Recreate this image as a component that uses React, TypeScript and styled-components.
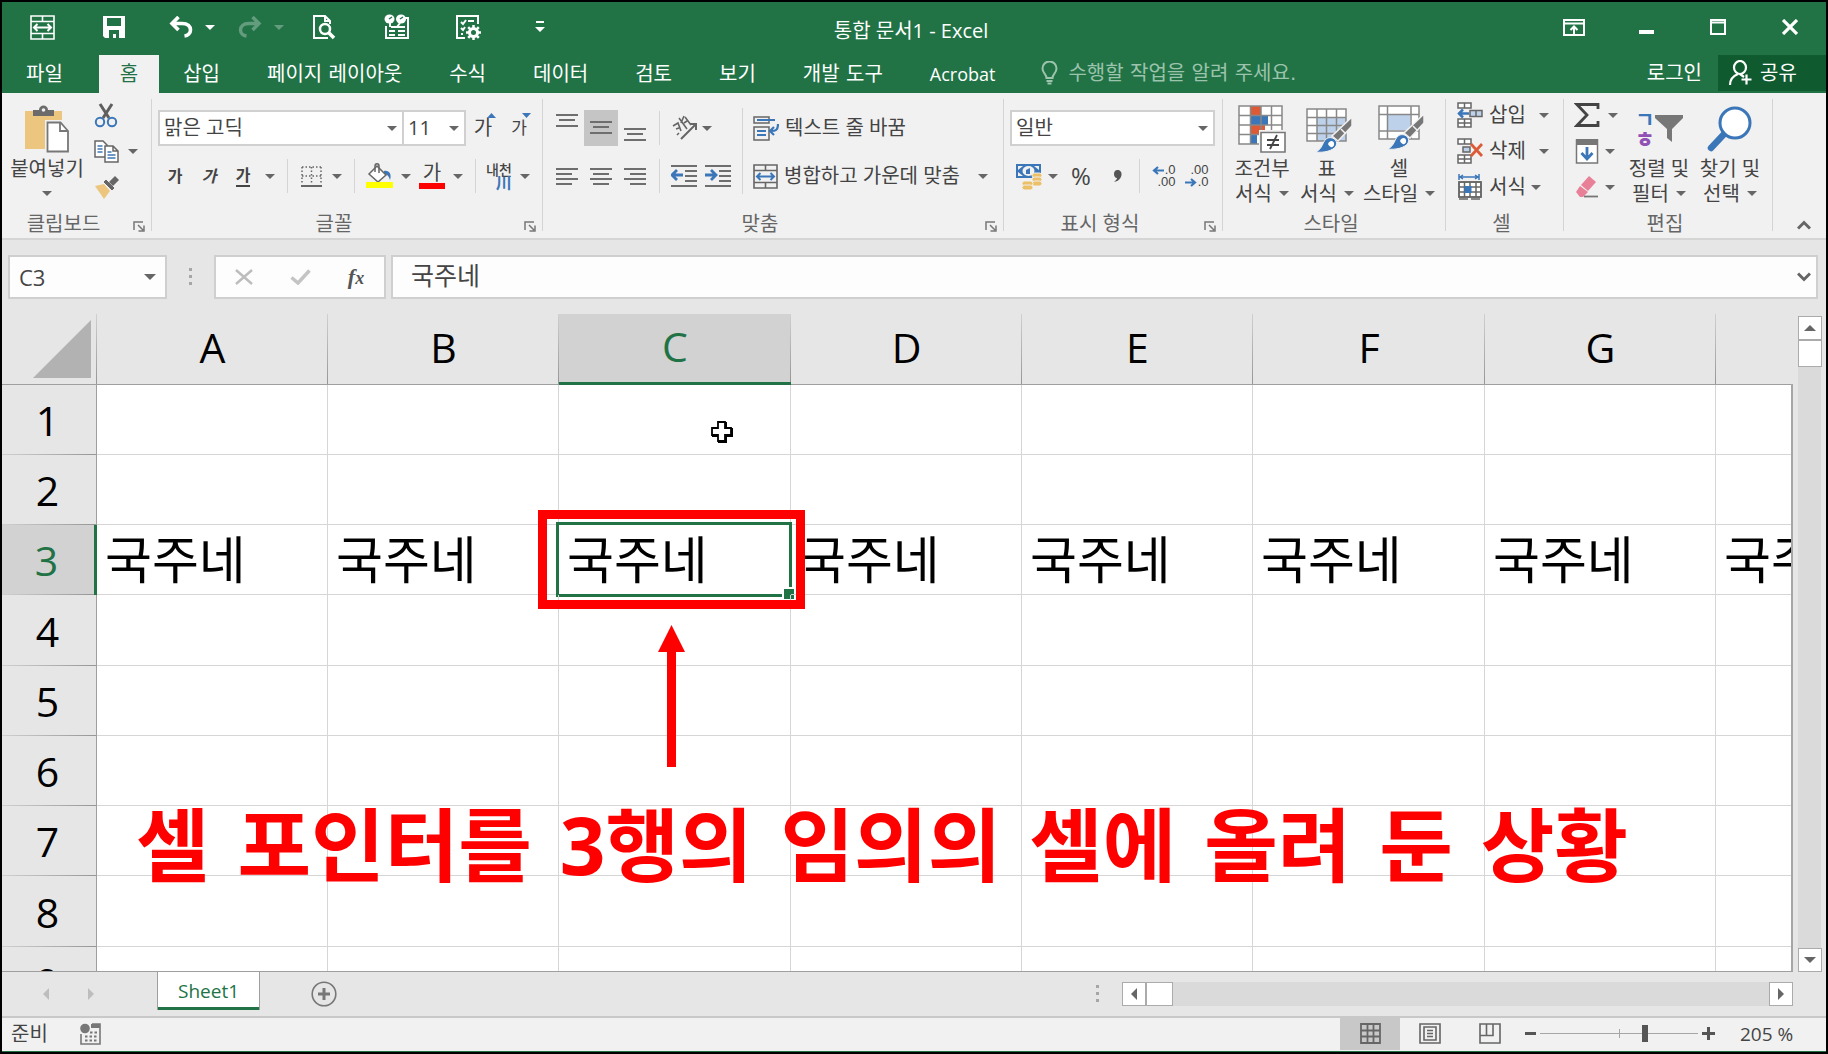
import React from 'react';
import styled, { createGlobalStyle, css } from 'styled-components';

const GREEN = '#217346';
const UI_FONT = '"Open Sans", "Noto Sans CJK KR", sans-serif';
const TAB_FONT = '"DejaVu Sans", "Noto Sans CJK KR", sans-serif';

const GlobalStyle = createGlobalStyle`
  * { box-sizing: border-box; }
  html, body { margin: 0; padding: 0; }
  body { font-family: ${UI_FONT}; font-size: 20px; line-height: 24px; color: #444; }
  button, input, select {
    font: inherit; color: inherit; margin: 0; padding: 0;
    border: 0; background: none; border-radius: 0; outline: none;
  }
  svg { display: block; flex: none; }
`;

/* ---------- window ---------- */

const Window = styled.div`
  display: flex;
  flex-direction: column;
  height: 100vh;
  border: 2px solid #000;
  background: #e6e6e6;
  overflow: hidden;
`;

const TitleBar = styled.header`
  display: grid;
  grid-template-columns: 1fr auto 1fr;
  height: 53px;
  flex: none;
  background: ${GREEN};
  color: #fff;
`;

const QuickAccess = styled.div`
  display: flex;
  padding-left: 4px;
  height: 44px;
`;

const QuickButton = styled.button<{ $split?: boolean; $faded?: boolean }>`
  display: flex;
  align-items: center;
  justify-content: ${p => (p.$split ? 'flex-start' : 'center')};
  gap: 12px;
  width: ${p => (p.$split ? 69 : 72)}px;
  height: 50px;
  flex: none;
  padding-left: ${p => (p.$split ? 19 : 0)}px;
  opacity: ${p => (p.$faded ? 0.3 : 1)};
`;

const WindowTitle = styled.h1`
  margin: 0;
  padding: 17px 6px 0 0;
  font-size: 20px;
  font-weight: 400;
  line-height: 24px;
  white-space: nowrap;
`;

const WindowControls = styled.div`
  display: flex;
  justify-content: flex-end;
`;

const ControlButton = styled.button`
  display: grid;
  place-items: center;
  width: 72px;
  height: 50px;
`;

/* ---------- tabs ---------- */

const TabBar = styled.nav`
  display: flex;
  height: 38px;
  flex: none;
  background: ${GREEN};
  color: #fff;
  font-family: ${TAB_FONT};
  white-space: nowrap;
`;

const Tab = styled.button<{ $active?: boolean; $file?: boolean; $latin?: boolean }>`
  padding: 0 23px 0 24px;
  ${p => p.$file && css`padding-right: 36px;`}
  font-size: 20px;
  line-height: 36px;
  ${p => p.$latin && css`
    font-family: ${UI_FONT};
    font-size: 18px;
  `}
  ${p => p.$active && css`
    padding: 0 21px;
    background: #f1f1f1;
    color: ${GREEN};
  `}
`;

const TellMe = styled.label`
  display: flex;
  align-items: center;
  gap: 10px;
  flex: 1;
  height: 36px;
  padding-left: 23px;
`;

const TellMeInput = styled.input`
  width: 300px;
  height: 36px;
  &::placeholder { color: #9cc3ac; opacity: 1; }
`;

const SignIn = styled.a`
  padding: 0 16px;
  line-height: 36px;
  color: #fff;
  text-decoration: none;
`;

const ShareButton = styled.button`
  display: flex;
  align-items: center;
  gap: 7px;
  width: 108px;
  height: 36px;
  padding-left: 10px;
  background: #0f5a2f;
`;

/* ---------- ribbon ---------- */

const Ribbon = styled.div`
  display: flex;
  height: 147px;
  flex: none;
  border-bottom: 2px solid #d5d5d5;
  background: #f1f1f1;
  white-space: nowrap;
`;

const Group = styled.section<{ $w: number }>`
  display: flex;
  flex-direction: column;
  justify-content: space-between;
  width: ${p => p.$w}px;
  flex: none;
  background: linear-gradient(#d4d4d4, #d4d4d4) right 0 top 6px / 1px 132px no-repeat;
`;

const GroupBody = styled.div<{ $top?: number; $left?: number }>`
  display: flex;
  padding: ${p => p.$top ?? 11}px 0 0 ${p => p.$left ?? 6}px;
`;

const GroupFooter = styled.div`
  display: flex;
  align-items: center;
  height: 28px;
  padding-right: 7px;
`;

const GroupName = styled.span`
  flex: 1;
  text-align: center;
  color: #666;
`;

const Launcher = styled.button`
  display: flex;
  justify-content: flex-end;
  width: 20px;
  padding-top: 4px;
`;

const Rows = styled.div`
  display: flex;
  flex-direction: column;
`;

const Row = styled.div<{ $h?: number }>`
  display: flex;
  align-items: center;
  height: ${p => p.$h ?? 48}px;
`;

const Tool = styled.button<{ $w: number; $active?: boolean }>`
  display: grid;
  place-items: center;
  width: ${p => p.$w}px;
  height: 36px;
  flex: none;
  background: ${p => (p.$active ? '#c5c5c5' : 'none')};
`;

const WideTool = styled.button`
  display: flex;
  align-items: center;
  gap: 6px;
  height: 36px;
`;

const Glyph = styled.span<{ $bold?: boolean; $italic?: boolean; $underline?: boolean; $size?: number }>`
  font-size: ${p => p.$size ?? 18}px;
  line-height: 20px;
  font-weight: ${p => (p.$bold ? 700 : 400)};
  font-style: ${p => (p.$italic ? 'italic' : 'normal')};
  border-bottom: ${p => (p.$underline ? '2px solid #444' : '0')};
`;

const CaretButton = styled.button<{ $w?: number }>`
  display: grid;
  place-items: center;
  width: ${p => p.$w ?? 20}px;
  height: 36px;
  flex: none;
`;

const Divider = styled.i<{ $tall?: boolean }>`
  width: 1px;
  height: ${p => (p.$tall ? 86 : 34)}px;
  margin: ${p => (p.$tall ? 4 : 0)}px 7px 0;
  flex: none;
  background: #d4d4d4;
`;

const SelectBox = styled.span<{ $w: number }>`
  display: grid;
  align-items: center;
  width: ${p => p.$w}px;
  height: 36px;
  border: 2px solid #d0d0d0;
  background: #fff;
  & + & { border-left: 0; }
  > * { grid-area: 1 / 1; }
  > svg { justify-self: end; margin-right: 5px; pointer-events: none; }
`;

const Select = styled.select`
  width: 100%;
  height: 32px;
  padding-left: 4px;
  appearance: none;
`;

const BigTool = styled.button<{ $w: number }>`
  display: flex;
  flex-direction: column;
  align-items: center;
  width: ${p => p.$w}px;
  flex: none;
  line-height: 25px;
`;

const BigIcon = styled.span`
  display: grid;
  place-items: center;
  height: 51px;
  padding-bottom: 3px;
`;

const CaretLine = styled.span`
  display: flex;
  align-items: center;
  justify-content: center;
  gap: 7px;
  height: 24px;
`;

const RibbonEnd = styled.div`
  display: flex;
  flex: 1;
  align-items: flex-end;
  justify-content: flex-end;
  padding: 0 15px 8px 0;
`;

/* ---------- formula bar ---------- */

const FormulaBar = styled.div`
  display: flex;
  align-items: center;
  height: 74px;
  flex: none;
  padding: 0 8px 0 6px;
`;

const Field = styled.div<{ $w?: number }>`
  display: flex;
  align-items: center;
  justify-content: space-between;
  width: ${p => (p.$w ? `${p.$w}px` : 'auto')};
  flex: ${p => (p.$w ? 'none' : '1')};
  height: 44px;
  border: 2px solid #cfcfcf;
  background: #fdfdfd;
`;

const NameInput = styled.input`
  width: 110px;
  height: 40px;
  padding-left: 9px;
  font-size: 22px;
`;

const FormulaInput = styled.input`
  flex: 1;
  min-width: 0;
  height: 40px;
  padding: 0 0 6px 18px;
  font-size: 25px;
`;

const FieldButton = styled.button<{ $w: number }>`
  display: grid;
  place-items: center;
  width: ${p => p.$w}px;
  height: 40px;
`;

const Grip = styled.span<{ $w: number }>`
  display: grid;
  place-items: center;
  width: ${p => p.$w}px;
  flex: none;
`;

const FxLabel = styled.span`
  font-family: "Liberation Serif", serif;
  font-style: italic;
  font-weight: 700;
  font-size: 22px;
  color: #555;
  small { font-size: 18px; }
`;

/* ---------- sheet ---------- */

const SheetArea = styled.main`
  display: flex;
  flex: 1;
  min-height: 0;
`;

const Viewport = styled.div`
  position: relative;
  flex: 1;
  min-width: 0;
  overflow: hidden;
  border-bottom: 1px solid #9f9f9f;
  &::after {
    content: '';
    position: absolute;
    top: 70px;
    right: 0;
    bottom: 0;
    width: 2px;
    background: #a6a6a6;
  }
`;

const Grid = styled.table`
  width: 1945px;
  table-layout: fixed;
  border-collapse: separate;
  border-spacing: 0;
  background: #fff;
`;

const Col = styled.col<{ $w: number }>`
  width: ${p => p.$w}px;
`;

const ColumnHead = styled.th<{ $selected?: boolean }>`
  height: 71px;
  padding: 0 0 5px;
  font-size: 41px;
  font-weight: 400;
  line-height: 48px;
  color: ${p => (p.$selected ? GREEN : '#000')};
  background:
    linear-gradient(#d0d0d0, #969696) right / 1px 100% no-repeat,
    ${p => (p.$selected ? '#d2d2d2' : '#e6e6e6')};
  border-bottom: ${p => (p.$selected ? `3px solid ${GREEN}` : '1px solid #9f9f9f')};
`;

const Corner = styled.td`
  padding: 0 6px 6px 31px;
  vertical-align: bottom;
  background: linear-gradient(#d0d0d0, #969696) right / 1px 100% no-repeat, #e6e6e6;
  border-bottom: 1px solid #9f9f9f;
`;

const RowHead = styled.th<{ $selected?: boolean }>`
  padding: 0 3px 0 0;
  font-size: 41px;
  font-weight: 400;
  line-height: 48px;
  color: ${p => (p.$selected ? GREEN : '#000')};
  background:
    linear-gradient(to right, #d0d0d0, #969696) bottom / 100% 1px no-repeat,
    ${p => (p.$selected ? '#d2d2d2' : '#e6e6e6')};
  border-right: ${p => (p.$selected ? `3px solid ${GREEN}` : '1px solid #9f9f9f')};
`;

const SheetRow = styled.tr`
  height: 70px;
  &:nth-child(4n) { height: 71px; }
`;

const Cell = styled.td`
  position: relative;
  padding: 0 0 2px 8px;
  font-size: 51px;
  font-weight: 400;
  line-height: 60px;
  color: #000;
  white-space: nowrap;
  border-right: 1px solid #d6d6d6;
  border-bottom: 1px solid #d6d6d6;
`;

const Selection = styled.i`
  position: absolute;
  inset: -3px -2px -3px -3px;
  border: 3px solid ${GREEN};
  &::after {
    content: '';
    position: absolute;
    right: -5px;
    bottom: -5px;
    width: 10px;
    height: 10px;
    border: solid #fff;
    border-width: 2px 0 0 2px;
    background: ${GREEN};
  }
`;

const RedFrame = styled.i`
  position: absolute;
  z-index: 2;
  inset: -15px -15px -15px -21px;
  border: 9px solid #f00;
`;

const RedArrow = styled.svg`
  position: absolute;
  z-index: 2;
  left: 99px;
  top: 100px;
`;

const Pointer = styled.svg`
  position: absolute;
  left: 151px;
  top: 35px;
`;

const Caption = styled.p`
  position: absolute;
  left: 134px;
  top: 482px;
  margin: 0;
  font-family: ${TAB_FONT};
  font-size: 80px;
  font-weight: 700;
  line-height: 96px;
  color: #f00;
  white-space: nowrap;
`;

const CaptionDigit = styled.span`
  font-family: "Open Sans", sans-serif;
`;

const VerticalScroll = styled.div`
  display: flex;
  flex-direction: column;
  width: 23px;
  margin: 2px 5px 0;
  flex: none;
  background: #dadada;
`;

const HorizontalScroll = styled.div`
  display: flex;
  flex: 0 1 671px;
  height: 24px;
  margin-right: 33px;
  background: #dadada;
`;

const ScrollButton = styled.button`
  display: grid;
  place-items: center;
  width: 24px;
  height: 24px;
  flex: none;
  border: 1px solid #ababab;
  background: #fff;
`;

const Thumb = styled.i<{ $w: number; $h: number }>`
  width: ${p => p.$w}px;
  height: ${p => p.$h}px;
  border: 1px solid #ababab;
  background: #fff;
`;

const Space = styled.i`
  flex: 1;
`;

/* ---------- bottom bars ---------- */

const SheetTabs = styled.div`
  display: flex;
  align-items: center;
  height: 44px;
  flex: none;
`;

const SheetNav = styled.div`
  display: flex;
  gap: 33px;
  width: 155px;
  padding-left: 38px;
  flex: none;
`;

const SheetTab = styled.button`
  width: 103px;
  height: 39px;
  margin-top: -1px;
  align-self: flex-start;
  flex: none;
  border: solid #9f9f9f;
  border-width: 0 1px;
  box-shadow: inset 0 -3px 0 ${GREEN};
  background: #fff;
  color: ${GREEN};
  font-size: 19px;
  line-height: 36px;
`;

const AddSheet = styled.button`
  margin-left: 51px;
`;

const StatusBar = styled.footer`
  display: flex;
  align-items: center;
  height: 36px;
  flex: none;
  padding-bottom: 2px;
  border-top: 2px solid #c8c8c8;
  border-bottom: 1px solid ${GREEN};
  background: #f1f1f1;
`;

const StatusText = styled.span`
  padding: 0 32px 0 9px;
`;

const ViewButton = styled.button<{ $active?: boolean }>`
  display: grid;
  place-items: center;
  width: 60px;
  height: 33px;
  background: ${p => (p.$active ? '#c8c8c8' : 'none')};
`;

const ZoomButton = styled.button`
  display: grid;
  place-items: center;
  width: 20px;
  height: 32px;
`;

const ZoomSlider = styled.input`
  width: 158px;
  height: 20px;
  appearance: none;
  background:
    linear-gradient(#a6a6a6, #a6a6a6) 79px center / 1px 9px no-repeat,
    linear-gradient(#a6a6a6, #a6a6a6) center / 100% 1px no-repeat;
  &::-webkit-slider-thumb {
    appearance: none;
    width: 6px;
    height: 17px;
    background: #555;
  }
`;

const ZoomValue = styled.output`
  width: 84px;
  padding-left: 18px;
  margin-left: 4px;
  font-size: 19px;
  white-space: nowrap;
`;

/* ---------- small icons ---------- */

const Caret = ({ color = '#666' }: { color?: string }) => (
  <svg width="10" height="5" viewBox="0 0 10 5"><path d="M0 0h10L5 5z" fill={color} /></svg>
);

const Drop = ({ w, label }: { w?: number; label: string }) => (
  <CaretButton $w={w} aria-label={label}><Caret /></CaretButton>
);

const LauncherIcon = () => (
  <svg width="12" height="11" viewBox="0 0 12 11" fill="none" stroke="#777" strokeWidth="1.5">
    <path d="M1 9V1h9M5 4l5 5M11 4.500V10H5.500" />
  </svg>
);

const MergeIcon = ({ line = '#666', arrow = '#3b76b8' }: { line?: string; arrow?: string }) => (
  <svg width="25" height="25" viewBox="0 0 25 25" fill="none" stroke={line} strokeWidth="1.6">
    <path d="M1 1h23v23H1zM1 6.500h23M1 18.500h23M12.500 1v5.500M12.500 18.500V24" />
    <path d="M4 12.500h17M7.500 9l-3.500 3.500L7.500 16M17.500 9l3.500 3.500-3.500 3.500" stroke={arrow} strokeWidth="2" />
  </svg>
);

const SaveIcon = () => (
  <svg width="24" height="24" viewBox="0 0 24 24">
    <path d="M1 1h22v22H3l-2-2z" fill="#fff" />
    <path d="M5 3h14v8H5zM7 15h10v8h-3v-4h-3v4H7z" fill={GREEN} />
  </svg>
);

const UndoIcon = () => (
  <svg width="24" height="22" viewBox="0 0 24 22" fill="none" stroke="#fff" strokeWidth="3.6">
    <path d="M9.500 1L3 7.500 9.500 14M3 7.500h10c6 0 8.500 3 8.500 6.500 0 3-2.500 5.500-6 6" />
  </svg>
);

const RedoIcon = () => (
  <svg width="24" height="22" viewBox="0 0 24 22" fill="none" stroke="#fff" strokeWidth="3.4">
    <path d="M14.500 1L21 7.500 14.500 14M21 7.500H11c-6 0-8.500 3-8.500 6.500 0 3 2.500 5.500 6 6" />
  </svg>
);

const PreviewIcon = () => (
  <svg width="24" height="26" viewBox="0 0 24 26" fill="none" stroke="#fff" strokeWidth="2">
    <path d="M16 24H2V2h11l5 5v3M13 2v5h5" />
    <circle cx="13" cy="15" r="5" strokeWidth="2.500" />
    <path d="M16.500 18.500L22 24" strokeWidth="3.500" />
  </svg>
);

const FormIcon = () => (
  <svg width="27" height="26" viewBox="0 0 27 26" fill="none" stroke="#fff" strokeWidth="2">
    <path d="M3 12v12h22V4h-3" />
    <ellipse cx="6.500" cy="5" rx="5" ry="4.500" fill="#fff" stroke="none" />
    <ellipse cx="18" cy="5" rx="5" ry="4.500" fill="#fff" stroke="none" />
    <path d="M6 5l3-2M17 5l3-2" stroke={GREEN} strokeWidth="1.500" />
    <path d="M7 9v4M17 9l-3 4M6 17h6M15 17h7M6 21h6M15 21h7M8 13h14" />
  </svg>
);

const OptionsIcon = () => (
  <svg width="27" height="26" viewBox="0 0 27 26" fill="none" stroke="#fff" strokeWidth="2">
    <path d="M10 24H2V2h21v8M6 8l2 2 3-4M13 7h6M6 14l2 2 2-3M6 20h2" />
    <circle cx="18.500" cy="18.500" r="4" strokeWidth="3" />
    <path d="M18.500 11v3M18.500 23v3M11 18.500h3M23 18.500h3M13.200 13.200l2 2M21.800 21.800l2 2M23.800 13.200l-2 2M15.200 21.800l-2 2" strokeWidth="2.500" />
  </svg>
);

const CustomizeIcon = () => (
  <svg width="10" height="12" viewBox="0 0 10 12" fill="#fff"><path d="M1 0h8v2H1zM0 6h10l-5 5z" /></svg>
);

const BulbIcon = () => (
  <svg width="17" height="24" viewBox="0 0 17 24" fill="none" stroke="#9cc3ac" strokeWidth="2">
    <path d="M5.500 17c0-4-4-5-4-9.500a7 7 0 0 1 14 0c0 4.500-4 5.500-4 9.500zM5.500 20h6M6.500 22.500h4" />
  </svg>
);

const ShareIcon = () => (
  <svg width="25" height="26" viewBox="0 0 25 26" fill="none" stroke="#fff" strokeWidth="2.200">
    <ellipse cx="12" cy="7.500" rx="6" ry="6.500" />
    <path d="M2 25c0-6 3-9 8-11M12 14l4 3M18.500 14.500v10M13.500 19.500h10" />
  </svg>
);

/* ---------- ribbon icons ---------- */

const PasteIcon = () => (
  <svg width="46" height="48" viewBox="0 0 46 48">
    <path d="M1 6h37v38H1z" fill="#ecc67e" />
    <path d="M9 11V5h6c0-6 9-6 9 0h6v6z" fill="#6b6b6b" />
    <circle cx="19.500" cy="5" r="1.800" fill="#f1f1f1" />
    <path d="M21 15h17v29H21z" fill="#f1f1f1" />
    <path d="M23.500 17.500h13L44 26v20.500H23.500z" fill="#fff" stroke="#777" strokeWidth="1.800" />
    <path d="M36 17.500V26h8" fill="none" stroke="#777" strokeWidth="1.800" />
  </svg>
);

const CutIcon = () => (
  <svg width="24" height="25" viewBox="0 0 24 25" fill="none">
    <path d="M6 1l9 14M18 1L9 15" stroke="#5f5f5f" strokeWidth="3" />
    <circle cx="6" cy="19" r="4.200" stroke="#3b76b8" strokeWidth="2" />
    <circle cx="18" cy="19" r="4.200" stroke="#3b76b8" strokeWidth="2" />
  </svg>
);

const CopyIcon = () => (
  <svg width="25" height="23" viewBox="0 0 25 23" fill="#fff" stroke="#666" strokeWidth="1.500">
    <path d="M1 1h8l4 4v12H1z" />
    <path d="M3.500 6h5M3.500 9h5M3.500 12h5" stroke="#3b76b8" />
    <path d="M11 6h8l5 5v11H11zM19 6v5h5" />
    <path d="M13.500 12h4M13.500 15h8M13.500 18h8" stroke="#3b76b8" />
  </svg>
);

const BrushIcon = () => (
  <svg width="25" height="23" viewBox="0 0 25 23">
    <path d="M1 10l9-2 6 7-6 8z" fill="#ecc67e" />
    <path d="M9 6l3-3 9 9-3 3z" fill="#666" stroke="#f1f1f1" />
    <path d="M15 6l6-6 4 4-6 6z" fill="#666" />
  </svg>
);

const GrowIcon = ({ down }: { down?: boolean }) => (
  <svg width="9" height="5" viewBox="0 0 9 5" fill="#3b76b8"><path d={down ? 'M0 0h9L4.500 5z' : 'M0 5h9L4.500 0z'} /></svg>
);

const SizeGlyph = styled.span<{ $size: number }>`
  display: flex;
  align-items: flex-start;
  font-size: ${p => p.$size}px;
  line-height: 30px;
  svg { margin-left: -5px; }
`;

const BorderIcon = () => (
  <svg width="21" height="21" viewBox="0 0 21 21" fill="none" stroke="#666" strokeWidth="1.500">
    <path d="M1 1h19M1 10h19M1 1v17M10.500 1v17M20 1v17" strokeDasharray="1.500 2" />
    <path d="M0 20h21" strokeWidth="2" />
  </svg>
);

const FillIcon = () => (
  <svg width="27" height="26" viewBox="0 0 27 26">
    <path d="M18 8c5-1 8 3 6 9-1-4-3-6-6-6z" fill="#3b76b8" />
    <path d="M3 11l8-8 9 9-8 7z" fill="#fff" stroke="#666" strokeWidth="1.500" />
    <path d="M9 9V3c0-3 4-3 4 0v7" fill="none" stroke="#666" strokeWidth="1.500" />
    <path d="M0 19h27v6H0z" fill="#ff0" />
  </svg>
);

const FontColor = styled.span`
  display: flex;
  flex-direction: column;
  align-items: center;
  width: 26px;
  border-bottom: 6px solid #f00;
  font-size: 20px;
  line-height: 20px;
`;

const Phonetic = styled.span`
  display: flex;
  flex-direction: column;
  font-size: 14px;
  font-weight: 500;
  line-height: 13px;
  b { align-self: flex-end; color: #3b76b8; font-size: 16px; line-height: 14px; }
`;

const VAlignIcon = ({ y }: { y: number }) => (
  <svg width="22" height="36" viewBox="0 0 22 36" fill="#6e6e6e">
    <path d={`M0 ${y}h22v2H0zM3 ${y + 5}h16v2H3zM0 ${y + 11}h22v2H0z`} />
  </svg>
);

const HAlignIcon = ({ x }: { x: number }) => (
  <svg width="22" height="17" viewBox="0 0 22 17" fill="#6e6e6e">
    <path d={`M0 0h22v2H0zM${x} 5h16v2H${x}zM0 10h22v2H0zM${x} 15h16v2H${x}z`} />
  </svg>
);

const OrientIcon = () => (
  <svg width="27" height="26" viewBox="0 0 27 26" fill="none" stroke="#666" strokeWidth="1.600">
    <path d="M10 24L25 9M19 9h6v6" strokeWidth="2" />
    <path d="M2 11l5-3 3 8M8 18l-2 2M8 3l8 11M13 8l3-2M13 1l-3 7M5 14l3-1M14 2l6 8" />
  </svg>
);

const IndentIcon = ({ right }: { right?: boolean }) => (
  <svg width="26" height="22" viewBox="0 0 26 22" fill="none">
    <path d="M0 1h26M14 6h12M14 11h12M14 16h12M0 21h26" stroke="#6e6e6e" strokeWidth="1.800" />
    <path d={right ? 'M0 10h10M6 5l5 5-5 5' : 'M12 10H2M6 5l-5 5 5 5'} stroke="#3b76b8" strokeWidth="2.800" />
  </svg>
);

const WrapIcon = () => (
  <svg width="26" height="25" viewBox="0 0 26 25" fill="none" stroke="#666" strokeWidth="1.500">
    <path d="M1 1h15v6H1zM1 11h15v13H1z" />
    <path d="M4 4h18M4 15h9M4 19h9" stroke="#3b76b8" strokeWidth="1.800" />
    <path d="M25 8c0 6-2 7-7 7M21 11l-4 4 4 4" stroke="#3b76b8" strokeWidth="2.200" />
  </svg>
);

const MoneyIcon = () => (
  <svg width="27" height="27" viewBox="0 0 27 27">
    <path d="M1 1h25v14H1z" fill="#3b76b8" />
    <path d="M3 3h5L3 7zM24 3h-5l5 4zM3 13h5L3 9z" fill="#f1f1f1" />
    <ellipse cx="13.500" cy="8" rx="6" ry="5" fill="#f1f1f1" />
    <path d="M11 7l4-2v6h-4z" fill="#3b76b8" />
    <g fill="#ecc067" stroke="#f1f1f1">
      <rect x="17" y="10" width="10" height="5" rx="2.500" /><rect x="17" y="14" width="10" height="5" rx="2.500" />
      <rect x="17" y="18" width="10" height="5" rx="2.500" /><rect x="7" y="18" width="11" height="5" rx="2.500" />
      <rect x="7" y="22" width="11" height="5" rx="2.500" />
    </g>
  </svg>
);

const Decimal = styled.span`
  display: flex;
  flex-direction: column;
  width: 25px;
  font-family: "Liberation Sans", sans-serif;
  font-size: 13px;
  line-height: 12px;
  span { display: flex; align-items: center; justify-content: flex-end; gap: 1px; }
`;

const SmallArrow = ({ right }: { right?: boolean }) => (
  <svg width="12" height="9" viewBox="0 0 12 9" fill="none" stroke="#3b76b8" strokeWidth="2.200">
    <path d={right ? 'M0 4.500h9M6 1l4 3.500L6 8' : 'M12 4.500H3M6 1L2 4.500 6 8'} />
  </svg>
);

const ConditionalIcon = () => (
  <svg width="48" height="48" viewBox="0 0 48 48">
    <path d="M1 1h43v38H1z" fill="#fff" />
    <path d="M13 1h10v9H13zM13 20h14v9H13z" fill="#dc5b36" />
    <path d="M13 11h17v9H13zM13 30h6v9h-6z" fill="#3b76b8" />
    <path d="M1 1h43v38H1zM1 10.500h43M1 20h43M1 29.500h43M12.500 1v38M23 1v38M33.500 1v38" fill="none" stroke="#888" strokeWidth="1.500" />
    <path d="M21 25h27v23H21z" fill="#f1f1f1" />
    <path d="M23 27.500h24V47H23z" fill="#fff" stroke="#777" strokeWidth="1.600" />
    <path d="M29 35h12M29 40h12M39 30l-7 14" fill="none" stroke="#444" strokeWidth="1.800" />
  </svg>
);

const PaintBrush = () => (
  <>
    <path d="M46 12v9L32 36l-6-5z" fill="#777" stroke="#f1f1f1" strokeWidth="1.500" />
    <path d="M35 24l5 5" stroke="#f1f1f1" strokeWidth="1.500" />
    <path d="M10 47c7-4 6-9 10-13 5-4 13 1 10 7-3 5-13 7-20 6z" fill="#3b76b8" stroke="#f1f1f1" />
    <path d="M22 39c2-5 7-3 6 1-1 3-4 3-6-1z" fill="#fff" />
  </>
);

const TableIcon = () => (
  <svg width="50" height="48" viewBox="-4 0 50 48">
    <path d="M1 4h39v32H1z" fill="#fff" />
    <path d="M11 13h29v23H11z" fill="#bdd2ea" />
    <path d="M1 4h39v32H1zM1 12.500h39M1 20.500h39M1 28.500h39M11 4v32M20.500 4v32M30.500 4v32" fill="none" stroke="#888" strokeWidth="1.500" />
    <PaintBrush />
  </svg>
);

const CellStyleIcon = () => (
  <svg width="50" height="48" viewBox="-4 0 50 48">
    <path d="M1 1h40v33H1z" fill="#fff" />
    <path d="M10 10h22v15H10z" fill="#bdd2ea" />
    <path d="M1 1h40v33H1zM1 9.500h40M1 26h40M9.500 1v33M33 1v33" fill="none" stroke="#888" strokeWidth="1.500" />
    <g transform="translate(0 -3)"><PaintBrush /></g>
  </svg>
);

const InsertIcon = () => (
  <svg width="26" height="26" viewBox="0 0 26 26" fill="#fff" stroke="#666" strokeWidth="1.500">
    <path d="M1 1h13v5H1zM7.500 1v5M1 17h13v8H1zM1 21h13M7.500 17v8" />
    <path d="M13 8.500h12v6H13zM19 8.500v6" fill="#bdd2ea" />
    <path d="M12 11.500H3M6 7.500l-4 4 4 4" fill="none" stroke="#3b76b8" strokeWidth="2.500" />
  </svg>
);

const DeleteIcon = () => (
  <svg width="26" height="26" viewBox="0 0 26 26" fill="#fff" stroke="#666" strokeWidth="1.500">
    <path d="M1 1h13v5H1zM7.500 1v5M1 17h13v8H1zM1 21h13M7.500 17v8" />
    <path d="M6 9h7v5H6z" fill="#bdd2ea" />
    <path d="M14 6l11 12M25 6L14 18" fill="none" stroke="#dc5b36" strokeWidth="2.800" />
  </svg>
);

const FormatIcon = () => (
  <svg width="26" height="26" viewBox="0 0 26 26" fill="none" stroke="#666" strokeWidth="1.500">
    <path d="M2 8h22v15H2z" fill="#fff" />
    <path d="M2 8h22v15H2zM2 13h22M2 18h22M7.500 8v15M13 8v15M19 8v15M2 25h9M14 25h9" />
    <path d="M7.500 12h7v7h-7z" fill="#3b76b8" stroke="none" />
    <path d="M2 0v6M22 0v6M3 3h18M6 1L3 3l3 2M18 1l3 2-3 2" stroke="#3b76b8" />
  </svg>
);

const SumIcon = () => (
  <svg width="26" height="24" viewBox="0 0 26 24" fill="none" stroke="#444" strokeWidth="2.800">
    <path d="M24 6V1.500H3L13 12 3 22.500h21V18" />
  </svg>
);

const FillDownIcon = () => (
  <svg width="24" height="25" viewBox="0 0 24 25">
    <path d="M1.500 1h21v23h-21z" fill="#fff" stroke="#777" strokeWidth="1.500" />
    <path d="M1 0h22v6H1z" fill="#777" />
    <path d="M12 8v12M6.500 14l5.500 6 5.500-6" fill="none" stroke="#3b76b8" strokeWidth="2.800" />
  </svg>
);

const EraserIcon = () => (
  <svg width="25" height="22" viewBox="0 0 25 22">
    <path d="M14 0l7 6-8 9-7-6z" fill="#e88097" />
    <path d="M5 10l8 6-5 5H5l-4-5z" fill="#e88097" />
    <path d="M9 20.500h14" stroke="#777" strokeWidth="1.800" />
  </svg>
);

const SortArt = styled.span`
  display: flex;
  align-items: center;
  height: 40px;
`;

const SortLetters = styled.span`
  display: flex;
  flex-direction: column;
  width: 20px;
  font-size: 21px;
  font-weight: 700;
  line-height: 20px;
  color: #3b76b8;
  b { color: #9150b4; }
`;

const FunnelIcon = () => (
  <svg width="28" height="28" viewBox="0 0 28 28" fill="#777"><path d="M0 0h28v3L17 14v13l-5-4v-9L0 3z" /></svg>
);

const FindIcon = () => (
  <svg width="46" height="46" viewBox="0 0 46 46">
    <path d="M19 26L4 42" stroke="#3b76b8" strokeWidth="6.500" strokeLinecap="round" />
    <circle cx="28" cy="17" r="15" fill="#fff" stroke="#3b76b8" strokeWidth="3" />
  </svg>
);

const Chevron = ({ up }: { up?: boolean }) => (
  <svg width="14" height="10" viewBox="0 0 14 10" fill="none" stroke="#666" strokeWidth="3">
    <path d={up ? 'M1 8.500l6-6 6 6' : 'M1 1.500l6 6 6-6'} />
  </svg>
);

const Dots = () => (
  <svg width="3" height="18" viewBox="0 0 3 18" fill="#a6a6a6"><path d="M0 0h3v3H0zM0 7h3v3H0zM0 14h3v3H0z" /></svg>
);

const Arrow = ({ dir, color = '#666' }: { dir: 'left' | 'right' | 'up' | 'down'; color?: string }) => {
  const shapes = { left: 'M9 0v12L3 6z', right: 'M3 0v12l6-6z', up: 'M0 9h12L6 3z', down: 'M0 3h12L6 9z' };
  return <svg width="12" height="12" viewBox="0 0 12 12" fill={color}><path d={shapes[dir]} /></svg>;
};

/* ---------- data ---------- */

const TABS = ['삽입', '페이지 레이아웃', '수식', '데이터', '검토', '보기', '개발 도구'];
const COLUMNS = ['A', 'B', 'C', 'D', 'E', 'F', 'G', ''];
const WIDTHS = [231, 231, 232, 231, 231, 232, 231, 231];
const ROWS = [1, 2, 3, 4, 5, 6, 7, 8, 9];
const WORD = '국주네';

/* ---------- sections ---------- */

const Footer = ({ name, launcher }: { name: string; launcher?: boolean }) => (
  <GroupFooter>
    <GroupName>{name}</GroupName>
    {launcher && <Launcher aria-label={`${name} 설정`}><LauncherIcon /></Launcher>}
  </GroupFooter>
);

const Big = ({ w, icon, top, bottom }: { w: number; icon: React.ReactNode; top: string; bottom?: string }) => (
  <BigTool $w={w}>
    <BigIcon>{icon}</BigIcon>
    <span>{top}</span>
    <CaretLine>{bottom}<Caret /></CaretLine>
  </BigTool>
);

const RibbonPanel = () => (
  <Ribbon>
    <Group $w={150}>
      <GroupBody $top={4} $left={7}>
        <GroupBody $top={8} $left={0}>
          <Big w={76} icon={<PasteIcon />} top="붙여넣기" />
        </GroupBody>
        <Rows>
          <Row $h={36}><Tool $w={42} aria-label="잘라내기"><CutIcon /></Tool></Row>
          <Row $h={36}><Tool $w={42} aria-label="복사"><CopyIcon /></Tool><Drop w={12} label="복사 옵션" /></Row>
          <Row $h={36}><Tool $w={42} aria-label="서식 복사"><BrushIcon /></Tool></Row>
        </Rows>
      </GroupBody>
      <Footer name="클립보드" launcher />
    </Group>

    <Group $w={391}>
      <GroupBody>
        <Rows>
          <Row>
            <SelectBox $w={246}><Select aria-label="글꼴"><option>맑은 고딕</option></Select><Caret /></SelectBox>
            <SelectBox $w={62}><Select aria-label="글꼴 크기"><option>11</option></Select><Caret /></SelectBox>
            <Tool $w={38} aria-label="글꼴 크게"><SizeGlyph $size={20}>가<GrowIcon /></SizeGlyph></Tool>
            <Tool $w={34} aria-label="글꼴 작게"><SizeGlyph $size={17}>가<GrowIcon down /></SizeGlyph></Tool>
          </Row>
          <Row>
            <Tool $w={34} aria-label="굵게"><Glyph $bold $size={16}>가</Glyph></Tool>
            <Tool $w={34} aria-label="기울임꼴"><Glyph $bold $italic $size={16}>가</Glyph></Tool>
            <Tool $w={34} aria-label="밑줄"><Glyph $bold $underline $size={16}>가</Glyph></Tool>
            <Drop label="밑줄 옵션" />
            <Divider />
            <Tool $w={32} aria-label="테두리"><BorderIcon /></Tool><Drop label="테두리 옵션" />
            <Divider />
            <Tool $w={34} aria-label="채우기 색"><FillIcon /></Tool><Drop label="채우기 색 옵션" />
            <Tool $w={32} aria-label="글꼴 색"><FontColor>가</FontColor></Tool><Drop label="글꼴 색 옵션" />
            <Divider />
            <Tool $w={32} aria-label="윗주"><Phonetic>내천<b>川</b></Phonetic></Tool><Drop label="윗주 옵션" />
          </Row>
        </Rows>
      </GroupBody>
      <Footer name="글꼴" launcher />
    </Group>

    <Group $w={461}>
      <GroupBody $left={7}>
        <Rows>
          <Row>
            <Tool $w={34} aria-label="위쪽 맞춤"><VAlignIcon y={4} /></Tool>
            <Tool $w={34} $active aria-label="가운데 맞춤"><VAlignIcon y={11} /></Tool>
            <Tool $w={34} aria-label="아래쪽 맞춤"><VAlignIcon y={18} /></Tool>
            <Divider />
            <Tool $w={34} aria-label="방향"><OrientIcon /></Tool><Drop w={12} label="방향 옵션" />
          </Row>
          <Row>
            <Tool $w={34} aria-label="왼쪽 맞춤"><HAlignIcon x={0} /></Tool>
            <Tool $w={34} aria-label="가로 가운데 맞춤"><HAlignIcon x={3} /></Tool>
            <Tool $w={34} aria-label="오른쪽 맞춤"><HAlignIcon x={6} /></Tool>
            <Divider />
            <Tool $w={34} aria-label="내어쓰기"><IndentIcon /></Tool>
            <Tool $w={34} aria-label="들여쓰기"><IndentIcon right /></Tool>
          </Row>
        </Rows>
        <Divider $tall />
        <GroupBody $top={0} $left={3}>
          <Rows>
            <Row><WideTool><WrapIcon />텍스트 줄 바꿈</WideTool></Row>
            <Row><WideTool><MergeIcon />병합하고 가운데 맞춤</WideTool><Drop w={46} label="병합 옵션" /></Row>
          </Rows>
        </GroupBody>
      </GroupBody>
      <Footer name="맞춤" launcher />
    </Group>

    <Group $w={219}>
      <GroupBody>
        <Rows>
          <Row><SelectBox $w={205}><Select aria-label="표시 형식"><option>일반</option></Select><Caret /></SelectBox></Row>
          <Row>
            <Tool $w={36} aria-label="회계 표시 형식"><MoneyIcon /></Tool><Drop w={14} label="회계 옵션" />
            <Tool $w={42}><Glyph $size={24}>%</Glyph></Tool>
            <Tool $w={30} aria-label="쉼표 스타일">
              <svg width="9" height="12" viewBox="0 0 9 12" fill="#555"><path d="M4.500 0C7 0 9 2 8.500 5 8 8 6 11 1 12c2-2 3-3 3-4C2 8 1 6 1 4s1-4 3.500-4z" /></svg>
            </Tool>
            <Divider />
            <Tool $w={32} aria-label="자릿수 늘림"><Decimal><span><SmallArrow />.0</span><span>.00</span></Decimal></Tool>
            <Tool $w={34} aria-label="자릿수 줄임"><Decimal><span>.00</span><span><SmallArrow right />.0</span></Decimal></Tool>
          </Row>
        </Rows>
      </GroupBody>
      <Footer name="표시 형식" launcher />
    </Group>

    <Group $w={223}>
      <GroupBody $top={12} $left={4}>
        <Big w={70} icon={<ConditionalIcon />} top="조건부" bottom="서식" />
        <Big w={60} icon={<TableIcon />} top="표" bottom="서식" />
        <Big w={84} icon={<CellStyleIcon />} top="셀" bottom="스타일" />
      </GroupBody>
      <Footer name="스타일" />
    </Group>

    <Group $w={118}>
      <GroupBody $top={4} $left={11}>
        <Rows>
          <Row $h={36}><WideTool><InsertIcon />삽입</WideTool><Drop w={36} label="삽입 옵션" /></Row>
          <Row $h={36}><WideTool><DeleteIcon />삭제</WideTool><Drop w={36} label="삭제 옵션" /></Row>
          <Row $h={36}><WideTool><FormatIcon />서식</WideTool><Drop label="서식 옵션" /></Row>
        </Rows>
      </GroupBody>
      <Footer name="셀" />
    </Group>

    <Group $w={209}>
      <GroupBody $top={4} $left={7}>
        <Rows>
          <Row $h={36}><Tool $w={32} aria-label="자동 합계"><SumIcon /></Tool><Drop label="합계 옵션" /></Row>
          <Row $h={36}><Tool $w={32} aria-label="채우기"><FillDownIcon /></Tool><Drop w={14} label="채우기 옵션" /></Row>
          <Row $h={36}><Tool $w={32} aria-label="지우기"><EraserIcon /></Tool><Drop w={14} label="지우기 옵션" /></Row>
        </Rows>
        <GroupBody $top={8} $left={0}>
          <Big
            w={72}
            icon={<SortArt><SortLetters>ㄱ<b>ㅎ</b></SortLetters><FunnelIcon /></SortArt>}
            top="정렬 및"
            bottom="필터"
          />
          <Big w={70} icon={<FindIcon />} top="찾기 및" bottom="선택" />
        </GroupBody>
      </GroupBody>
      <Footer name="편집" />
    </Group>

    <RibbonEnd><button aria-label="리본 축소"><Chevron up /></button></RibbonEnd>
  </Ribbon>
);

const Sheet = () => (
  <SheetArea>
    <Viewport>
      <Grid>
        <colgroup>
          <Col $w={95} />
          {WIDTHS.map((w, i) => <Col key={i} $w={w} />)}
        </colgroup>
        <thead>
          <tr>
            <Corner>
              <svg width="58" height="58" viewBox="0 0 58 58"><path d="M58 0v58H0z" fill="#b2b2b2" /></svg>
            </Corner>
            {COLUMNS.map((c, i) => <ColumnHead key={i} scope="col" $selected={c === 'C'}>{c}</ColumnHead>)}
          </tr>
        </thead>
        <tbody>
          {ROWS.map(r => (
            <SheetRow key={r}>
              <RowHead scope="row" $selected={r === 3}>{r}</RowHead>
              {COLUMNS.map((c, i) => (
                <Cell key={i}>
                  {r === 3 && WORD}
                  {r === 1 && c === 'C' && (
                    <Pointer width="24" height="24" viewBox="0 0 24 24">
                      <path d="M8 2h9v6h6v9h-6v6H8v-6H2V8h6z" fill="#000" />
                      <path d="M8 2h7v6h6v7h-6v6H8v-6H2V8h6z" fill="#fff" stroke="#000" strokeWidth="1.800" />
                    </Pointer>
                  )}
                  {r === 3 && c === 'C' && (
                    <>
                      <Selection />
                      <RedFrame />
                      <RedArrow width="27" height="142" viewBox="0 0 27 142">
                        <path d="M13.500 0L27 27h-9v115H9V27H0z" fill="#f00" />
                      </RedArrow>
                    </>
                  )}
                </Cell>
              ))}
            </SheetRow>
          ))}
        </tbody>
      </Grid>
      <Caption>셀 포인터를 <CaptionDigit>3</CaptionDigit>행의 임의의 셀에 올려 둔 상황</Caption>
    </Viewport>
    <VerticalScroll>
      <ScrollButton aria-label="위로"><Arrow dir="up" /></ScrollButton>
      <Thumb $w={24} $h={27} />
      <Space />
      <ScrollButton aria-label="아래로"><Arrow dir="down" /></ScrollButton>
    </VerticalScroll>
  </SheetArea>
);

export default function App() {
  return (
    <>
      <GlobalStyle />
      <Window>
        <TitleBar>
          <QuickAccess>
            <QuickButton aria-label="병합"><MergeIcon line="#fff" arrow="#fff" /></QuickButton>
            <QuickButton aria-label="저장"><SaveIcon /></QuickButton>
            <QuickButton $split aria-label="실행 취소"><UndoIcon /><Caret color="#fff" /></QuickButton>
            <QuickButton $split $faded aria-label="다시 실행"><RedoIcon /><Caret color="#fff" /></QuickButton>
            <QuickButton aria-label="인쇄 미리 보기"><PreviewIcon /></QuickButton>
            <QuickButton aria-label="레코드 양식"><FormIcon /></QuickButton>
            <QuickButton aria-label="옵션"><OptionsIcon /></QuickButton>
            <QuickButton aria-label="도구 모음 사용자 지정"><CustomizeIcon /></QuickButton>
          </QuickAccess>
          <WindowTitle>통합 문서1 - Excel</WindowTitle>
          <WindowControls>
            <ControlButton aria-label="리본 표시 옵션">
              <svg width="22" height="17" viewBox="0 0 22 17" fill="none" stroke="#fff" strokeWidth="2">
                <path d="M1 1h20v15H1zM1 4.500h20M11 15V8M7.500 11L11 7.500l3.500 3.500" />
              </svg>
            </ControlButton>
            <ControlButton aria-label="최소화">
              <svg width="15" height="13" viewBox="0 0 15 13"><path d="M0 9h15v4H0z" fill="#fff" /></svg>
            </ControlButton>
            <ControlButton aria-label="최대화">
              <svg width="16" height="16" viewBox="0 0 16 16" fill="none" stroke="#fff" strokeWidth="2"><path d="M1 1h14v14H1zM1 3.500h14" /></svg>
            </ControlButton>
            <ControlButton aria-label="닫기">
              <svg width="16" height="16" viewBox="0 0 16 16" stroke="#fff" strokeWidth="3.200"><path d="M1 1l14 14M15 1L1 15" /></svg>
            </ControlButton>
          </WindowControls>
        </TitleBar>

        <TabBar>
          <Tab $file>파일</Tab>
          <Tab $active>홈</Tab>
          {TABS.map(t => <Tab key={t}>{t}</Tab>)}
          <Tab $latin>Acrobat</Tab>
          <TellMe>
            <BulbIcon />
            <TellMeInput placeholder="수행할 작업을 알려 주세요." />
          </TellMe>
          <SignIn href="#login">로그인</SignIn>
          <ShareButton><ShareIcon />공유</ShareButton>
        </TabBar>

        <RibbonPanel />

        <FormulaBar>
          <Field $w={159}>
            <NameInput aria-label="이름 상자" defaultValue="C3" />
            <FieldButton $w={30} aria-label="이름 목록"><Arrow dir="down" /></FieldButton>
          </Field>
          <Grip $w={47}><Dots /></Grip>
          <Field $w={172}>
            <FieldButton $w={56} aria-label="취소">
              <svg width="18" height="16" viewBox="0 0 18 16" stroke="#bdbdbd" strokeWidth="2.500"><path d="M1 1l16 14M17 1L1 15" /></svg>
            </FieldButton>
            <FieldButton $w={56} aria-label="입력">
              <svg width="21" height="16" viewBox="0 0 21 16" fill="none" stroke="#c4c4c4" strokeWidth="3.500"><path d="M1.500 8.500L8 14 19.500 1.500" /></svg>
            </FieldButton>
            <FieldButton $w={56} aria-label="함수 삽입"><FxLabel>f<small>x</small></FxLabel></FieldButton>
          </Field>
          <Grip $w={5} />
          <Field>
            <FormulaInput aria-label="수식 입력줄" defaultValue={WORD} />
            <FieldButton $w={24} aria-label="수식 입력줄 확장"><Chevron /></FieldButton>
          </Field>
        </FormulaBar>

        <Sheet />

        <SheetTabs>
          <SheetNav>
            <Arrow dir="left" color="#bdbdbd" />
            <Arrow dir="right" color="#bdbdbd" />
          </SheetNav>
          <SheetTab>Sheet1</SheetTab>
          <AddSheet aria-label="새 시트">
            <svg width="26" height="26" viewBox="0 0 26 26" fill="none" stroke="#777">
              <circle cx="13" cy="13" r="11.800" strokeWidth="1.600" />
              <path d="M13 7v12M7 13h12" strokeWidth="3" />
            </svg>
          </AddSheet>
          <Space />
          <Grip $w={49}><Dots /></Grip>
          <HorizontalScroll>
            <ScrollButton aria-label="왼쪽으로"><Arrow dir="left" /></ScrollButton>
            <Thumb $w={27} $h={24} />
            <Space />
            <ScrollButton aria-label="오른쪽으로"><Arrow dir="right" /></ScrollButton>
          </HorizontalScroll>
        </SheetTabs>

        <StatusBar>
          <StatusText>준비</StatusText>
          <svg width="21" height="22" viewBox="0 0 21 22">
            <path d="M1 11v10h19V1h-8" fill="none" stroke="#777" strokeWidth="1.600" />
            <path d="M11 1h9v4h-9z" fill="#777" />
            <circle cx="5" cy="5.500" r="4.800" fill="#777" />
            <path d="M5 13.500h13M5 17.500h13M10 9.500h8" stroke="#777" strokeWidth="2" strokeDasharray="2.500 2" />
          </svg>
          <Space />
          <ViewButton $active aria-label="기본">
            <svg width="21" height="21" viewBox="0 0 21 21" fill="none" stroke="#666" strokeWidth="1.800"><path d="M1 1h19v19H1zM1 7.500h19M1 13.500h19M7.500 1v19M13.500 1v19" /></svg>
          </ViewButton>
          <ViewButton aria-label="페이지 레이아웃">
            <svg width="22" height="21" viewBox="0 0 22 21" fill="none" stroke="#666" strokeWidth="1.600"><path d="M1 1h20v19H1zM5 4h12v13H5zM8 7.500h6M8 10.500h6M8 13.500h6" /></svg>
          </ViewButton>
          <ViewButton aria-label="페이지 나누기 미리 보기">
            <svg width="22" height="21" viewBox="0 0 22 21" fill="none" stroke="#666" strokeWidth="1.600"><path d="M1 1h20v19H1zM1 12.500h13V1M7.500 1v11" /></svg>
          </ViewButton>
          <ZoomButton aria-label="축소"><svg width="11" height="3"><path d="M0 0h11v3H0z" fill="#555" /></svg></ZoomButton>
          <ZoomSlider type="range" aria-label="확대/축소" min={0} max={100} defaultValue={67} />
          <ZoomButton aria-label="확대"><svg width="13" height="13"><path d="M5 0h3v5h5v3H8v5H5V8H0V5h5z" fill="#555" /></svg></ZoomButton>
          <ZoomValue>205 %</ZoomValue>
          <Grip $w={20} />
        </StatusBar>
      </Window>
    </>
  );
}
